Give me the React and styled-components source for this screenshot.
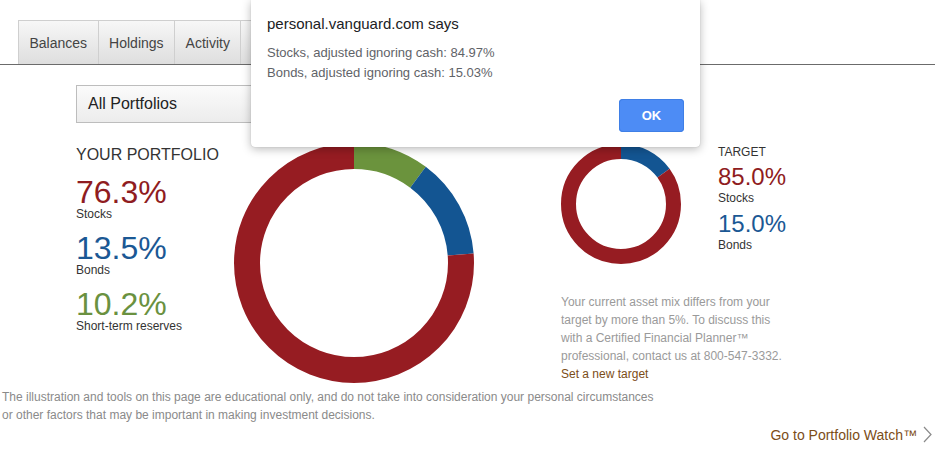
import React from "react";
import styled, { createGlobalStyle } from "styled-components";

const GlobalStyle = createGlobalStyle`
  html, body { margin: 0; padding: 0; background: #fff; }
  body { font-family: "Liberation Sans", Arial, sans-serif; }
`;

const Page = styled.div`
  position: relative;
  width: 935px;
  height: 464px;
  overflow: hidden;
  background: #fff;
`;

const TabBar = styled.div`
  display: flex;
  padding: 20px 0 0 18px;
  border-bottom: 1px solid #6b6b6b;
`;

const Tab = styled.div`
  height: 43px;
  display: flex;
  align-items: center;
  padding: 0 10.5px;
  margin-left: -1px;
  border: 1px solid #cfcfcf;
  border-bottom: none;
  background: linear-gradient(#f7f7f7, #dedede);
  color: #444;
  font-size: 14px;
  min-width: ${(p) => p.$minWidth || 0}px;
  &:first-child { margin-left: 0; }
`;

const Select = styled.div`
  margin: 20px 0 0 76px;
  width: 280px;
  height: 38px;
  box-sizing: border-box;
  display: flex;
  align-items: center;
  padding: 0 11px;
  border: 1px solid #bdbdbd;
  background: linear-gradient(#fbfbfb, #ececec);
  color: #222;
  font-size: 16px;
`;

const MainRow = styled.div`
  display: flex;
  margin-top: 20px;
  padding-left: 76px;
`;

const LeftCol = styled.div`
  width: 158px;
  padding-top: 3px;
`;

const Heading = styled.div`
  font-size: 16px;
  line-height: 18px;
  color: #333;
  margin-bottom: 12px;
`;

const StatBlock = styled.div`
  margin-bottom: ${(p) => p.$gap}px;
`;

const StatValue = styled.div`
  font-size: ${(p) => p.$size}px;
  line-height: ${(p) => p.$size}px;
  color: ${(p) => p.$color};
`;

const StatLabel = styled.div`
  font-size: 12px;
  line-height: 14px;
  color: #333;
  margin-top: ${(p) => p.$offset}px;
`;

const RightSection = styled.div`
  margin-left: 87px;
  display: flex;
  flex-direction: column;
`;

const TargetRow = styled.div`
  display: flex;
  gap: 37px;
  padding-top: 1px;
`;

const TargetCol = styled.div`
  padding-top: 1px;
`;

const TargetHeading = styled.div`
  font-size: 12px;
  line-height: 14px;
  color: #333;
  margin-bottom: 6px;
`;

const Note = styled.p`
  margin: 29px 0 0 0;
  font-size: 12px;
  line-height: 18px;
  color: #9a9a9a;
  white-space: nowrap;
`;

const Link = styled.a`
  color: #7c4d17;
  text-decoration: none;
  display: block;
`;

const Disclaimer = styled.p`
  margin: 5px 0 0 0;
  padding-left: 2px;
  font-size: 12px;
  line-height: 18px;
  color: #8a8a8a;
  white-space: nowrap;
`;

const WatchRow = styled.div`
  display: flex;
  justify-content: flex-end;
  align-items: center;
  gap: 6px;
  margin-top: 2px;
  padding-right: 3px;
  font-size: 14px;
  line-height: 16px;
  color: #7c4d17;
`;

const Dialog = styled.div`
  position: absolute;
  top: 0;
  left: 251px;
  width: 449px;
  height: 147px;
  box-sizing: border-box;
  padding: 15px 16px;
  background: #fff;
  border-radius: 0 0 4px 4px;
  box-shadow: 0 2px 10px rgba(0, 0, 0, 0.28), 0 0 1px rgba(0, 0, 0, 0.25);
  display: flex;
  flex-direction: column;
`;

const DialogTitle = styled.div`
  font-size: 15px;
  line-height: 18px;
  color: #202124;
  margin-bottom: 10px;
`;

const DialogLine = styled.div`
  font-size: 13px;
  line-height: 20px;
  color: #5f6368;
`;

const DialogActions = styled.div`
  display: flex;
  justify-content: flex-end;
  margin-top: 16px;
`;

const OkButton = styled.button`
  width: 65px;
  height: 33px;
  border: none;
  border-radius: 4px;
  background: #4d8cf5;
  color: #fff;
  font-family: "Liberation Sans", Arial, sans-serif;
  font-weight: bold;
  font-size: 13px;
  box-shadow: 0 0 0 1px #3f7fe6 inset;
`;

function Donut({ size, thickness, segments }) {
  const r = size / 2 - thickness / 2;
  const c = 2 * Math.PI * r;
  let offset = 0;
  return (
    <svg width={size} height={size} viewBox={`0 0 ${size} ${size}`} style={{ display: "block" }}>
      <g transform={`rotate(-90 ${size / 2} ${size / 2})`}>
        {segments.map((s, i) => {
          const len = (s.value / 100) * c;
          const el = (
            <circle
              key={i}
              cx={size / 2}
              cy={size / 2}
              r={r}
              fill="none"
              stroke={s.color}
              strokeWidth={thickness}
              strokeDasharray={`${len} ${c - len}`}
              strokeDashoffset={-offset}
            />
          );
          offset += len;
          return el;
        })}
      </g>
    </svg>
  );
}

const RED = "#961c22";
const BLUE = "#135592";
const GREEN = "#6b933d";

export default function App() {
  return (
    <Page>
      <GlobalStyle />
      <TabBar>
        <Tab>Balances</Tab>
        <Tab>Holdings</Tab>
        <Tab>Activity</Tab>
        <Tab $minWidth={100} />
      </TabBar>
      <Select>All Portfolios</Select>
      <MainRow>
        <LeftCol>
          <Heading>YOUR PORTFOLIO</Heading>
          <StatBlock $gap={11}>
            <StatValue $size={32} $color="#8f1c21">76.3%</StatValue>
            <StatLabel $offset={-1}>Stocks</StatLabel>
          </StatBlock>
          <StatBlock $gap={11}>
            <StatValue $size={32} $color="#1b5894">13.5%</StatValue>
            <StatLabel $offset={-1}>Bonds</StatLabel>
          </StatBlock>
          <StatBlock $gap={0}>
            <StatValue $size={32} $color="#6a9140">10.2%</StatValue>
            <StatLabel $offset={-1}>Short-term reserves</StatLabel>
          </StatBlock>
        </LeftCol>
        <Donut
          size={240}
          thickness={26}
          segments={[
            { value: 10.2, color: GREEN },
            { value: 13.5, color: BLUE },
            { value: 76.3, color: RED },
          ]}
        />
        <RightSection>
          <TargetRow>
            <Donut
              size={120}
              thickness={15}
              segments={[
                { value: 15, color: BLUE },
                { value: 85, color: RED },
              ]}
            />
            <TargetCol>
              <TargetHeading>TARGET</TargetHeading>
              <StatBlock $gap={7}>
                <StatValue $size={24} $color="#8f1c21">85.0%</StatValue>
                <StatLabel $offset={2}>Stocks</StatLabel>
              </StatBlock>
              <StatBlock $gap={0}>
                <StatValue $size={24} $color="#1b5894">15.0%</StatValue>
                <StatLabel $offset={2}>Bonds</StatLabel>
              </StatBlock>
            </TargetCol>
          </TargetRow>
          <Note>
            Your current asset mix differs from your
            <br />
            target by more than 5%. To discuss this
            <br />
            with a Certified Financial Planner™
            <br />
            professional, contact us at 800-547-3332.
            <Link href="#">Set a new target</Link>
          </Note>
        </RightSection>
      </MainRow>
      <Disclaimer>
        The illustration and tools on this page are educational only, and do not take into consideration your personal circumstances
        <br />
        or other factors that may be important in making investment decisions.
      </Disclaimer>
      <WatchRow>
        <span>Go to Portfolio Watch™</span>
        <svg width="9" height="17" viewBox="0 0 9 17" style={{ display: "block" }}>
          <polyline points="1,1 8,8.5 1,16" fill="none" stroke="#8a8a8a" strokeWidth="1.2" />
        </svg>
      </WatchRow>
      <Dialog>
        <DialogTitle>personal.vanguard.com says</DialogTitle>
        <DialogLine>Stocks, adjusted ignoring cash: 84.97%</DialogLine>
        <DialogLine>Bonds, adjusted ignoring cash: 15.03%</DialogLine>
        <DialogActions>
          <OkButton>OK</OkButton>
        </DialogActions>
      </Dialog>
    </Page>
  );
}
